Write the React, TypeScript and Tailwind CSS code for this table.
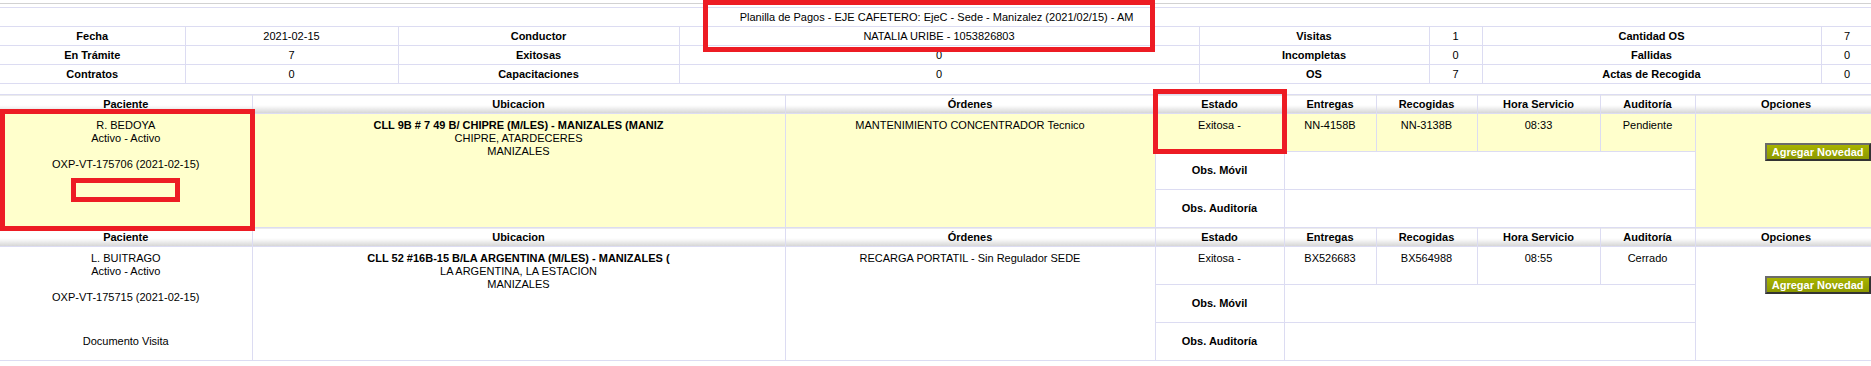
import React from 'react';

type Visit = {
  paciente: string;
  estadoPaciente: string;
  codigo: string;
  documento?: string;
  direccion: string;
  barrio: string;
  ciudad: string;
  orden: string;
  estado: string;
  entregas: string;
  recogidas: string;
  hora: string;
  auditoria: string;
  highlight: boolean;
};

const visits: Visit[] = [
  {
    paciente: 'R. BEDOYA',
    estadoPaciente: 'Activo - Activo',
    codigo: 'OXP-VT-175706 (2021-02-15)',
    direccion: 'CLL 9B # 7 49 B/ CHIPRE (M/LES) - MANIZALES (MANIZ',
    barrio: 'CHIPRE, ATARDECERES',
    ciudad: 'MANIZALES',
    orden: 'MANTENIMIENTO CONCENTRADOR Tecnico',
    estado: 'Exitosa -',
    entregas: 'NN-4158B',
    recogidas: 'NN-3138B',
    hora: '08:33',
    auditoria: 'Pendiente',
    highlight: true,
  },
  {
    paciente: 'L. BUITRAGO',
    estadoPaciente: 'Activo - Activo',
    codigo: 'OXP-VT-175715 (2021-02-15)',
    documento: 'Documento Visita',
    direccion: 'CLL 52 #16B-15 B/LA ARGENTINA (M/LES) - MANIZALES (',
    barrio: 'LA ARGENTINA, LA ESTACION',
    ciudad: 'MANIZALES',
    orden: 'RECARGA PORTATIL - Sin Regulador SEDE',
    estado: 'Exitosa -',
    entregas: 'BX526683',
    recogidas: 'BX564988',
    hora: '08:55',
    auditoria: 'Cerrado',
    highlight: false,
  },
];

const summary = [
  ['Fecha', '2021-02-15', 'Conductor', 'NATALIA URIBE - 1053826803', 'Visitas', '1', 'Cantidad OS', '7'],
  ['En Trámite', '7', 'Exitosas', '0', 'Incompletas', '0', 'Fallidas', '0'],
  ['Contratos', '0', 'Capacitaciones', '0', 'OS', '7', 'Actas de Recogida', '0'],
];

const headers = ['Paciente', 'Ubicacion', 'Órdenes', 'Estado', 'Entregas', 'Recogidas', 'Hora Servicio', 'Auditoría', 'Opciones'];

const td = 'border border-[#dcdcf2] text-center align-top p-0 pt-[5px] leading-[13px]';

function VisitRows({ v }: { v: Visit }) {
  const bg = v.highlight ? 'bg-[#ffffcc]' : 'bg-white';
  return (
    <>
      <tr className="h-[19px]">
        {headers.map((h, i) => (
          <th
            key={h}
            className={`border border-[#dcdcf2] ${i === 0 ? 'border-l-0' : ''} p-0 font-bold leading-[13px] bg-linear-to-b from-white from-55% to-[#d4d4d4]`}
          >
            {h}
          </th>
        ))}
      </tr>
      <tr className="h-[38px]">
        <td rowSpan={3} className={`${td} border-l-0 ${bg}`}>
          <div>{v.paciente}</div>
          <div>{v.estadoPaciente}</div>
          <div className="h-[13px]" />
          <div>{v.codigo}</div>
          {v.documento && <div className="mt-[31px]">{v.documento}</div>}
        </td>
        <td rowSpan={3} className={`${td} ${bg}`}>
          <div className="font-bold">{v.direccion}</div>
          <div>{v.barrio}</div>
          <div>{v.ciudad}</div>
        </td>
        <td rowSpan={3} className={`${td} ${bg}`}>{v.orden}</td>
        <td className={`${td} ${bg}`}>{v.estado}</td>
        <td className={`${td} ${bg}`}>{v.entregas}</td>
        <td className={`${td} ${bg}`}>{v.recogidas}</td>
        <td className={`${td} ${bg}`}>{v.hora}</td>
        <td className={`${td} ${bg}`}>{v.auditoria}</td>
        <td rowSpan={3} className={`border border-[#dcdcf2] align-top p-0 ${bg}`}>
          <div className="flex justify-end pt-[29px] pr-[6px]">
            <button className="h-[18px] px-[5px] border-2 border-t-[#6b6b6b] border-l-[#6b6b6b] border-r-[#333] border-b-[#333] bg-linear-to-b from-[#a8b400] to-[#8c9800] text-white font-bold text-[11px] leading-[12px]">
              Agregar Novedad
            </button>
          </div>
        </td>
      </tr>
      <tr className="h-[38px]">
        <td className="border border-[#dcdcf2] bg-white text-center align-middle font-bold p-0">Obs. Móvil</td>
        <td colSpan={4} className="border border-[#dcdcf2] bg-white p-0" />
      </tr>
      <tr className="h-[38px]">
        <td className="border border-[#dcdcf2] bg-white text-center align-middle font-bold p-0">Obs. Auditoría</td>
        <td colSpan={4} className="border border-[#dcdcf2] bg-white p-0" />
      </tr>
    </>
  );
}

export default function App() {
  return (
    <div className="relative w-full h-[366px] overflow-hidden bg-white font-['Liberation_Sans',Arial,sans-serif] text-[11px] text-black">
      <div className="pt-[3px]">
        <div className="h-[4px] border-t border-[#d2d2d2]" />

        {/* Resumen de la planilla */}
        <table className="table-fixed border-collapse w-[1873px]">
          <colgroup>
            <col className="w-[185px]" />
            <col className="w-[213px]" />
            <col className="w-[281px]" />
            <col className="w-[520px]" />
            <col className="w-[230px]" />
            <col className="w-[53px]" />
            <col className="w-[339px]" />
            <col className="w-[52px]" />
          </colgroup>
          <tbody>
            <tr className="h-[19px]">
              <td colSpan={8} className="border-t border-b border-[#dcdcf2] text-center p-0 leading-[13px]">
                Planilla de Pagos - EJE CAFETERO: EjeC - Sede - Manizalez (2021/02/15) - AM
              </td>
            </tr>
            {summary.map((row, r) => (
              <tr key={r} className="h-[19px]">
                {row.map((c, i) => (
                  <td
                    key={i}
                    className={`border border-[#dcdcf2] ${i === 0 ? 'border-l-0' : ''} text-center p-0 leading-[13px] ${i % 2 === 0 ? 'font-bold' : ''}`}
                  >
                    {c}
                  </td>
                ))}
              </tr>
            ))}
          </tbody>
        </table>

        {/* Visitas */}
        <table className="table-fixed border-collapse w-[1877px] mt-[10px]">
          <colgroup>
            <col className="w-[252px]" />
            <col className="w-[533px]" />
            <col className="w-[370px]" />
            <col className="w-[129px]" />
            <col className="w-[92px]" />
            <col className="w-[101px]" />
            <col className="w-[123px]" />
            <col className="w-[95px]" />
            <col className="w-[182px]" />
          </colgroup>
          <tbody>
            {visits.map((v) => (
              <VisitRows key={v.codigo} v={v} />
            ))}
          </tbody>
        </table>
      </div>

      {/* marcas rojas sobre la captura */}
      <div className="absolute left-[703px] top-0 w-[452px] h-[52px] border-[5px] border-[#ed1c24]" />
      <div className="absolute left-[1153px] top-[89px] w-[134px] h-[65px] border-[5px] border-[#ed1c24]" />
      <div className="absolute left-0 top-[109px] w-[255px] h-[122px] border-[5px] border-[#ed1c24]" />
      <div className="absolute left-[71px] top-[178px] w-[109px] h-[24px] border-[5px] border-[#ed1c24]" />
    </div>
  );
}
